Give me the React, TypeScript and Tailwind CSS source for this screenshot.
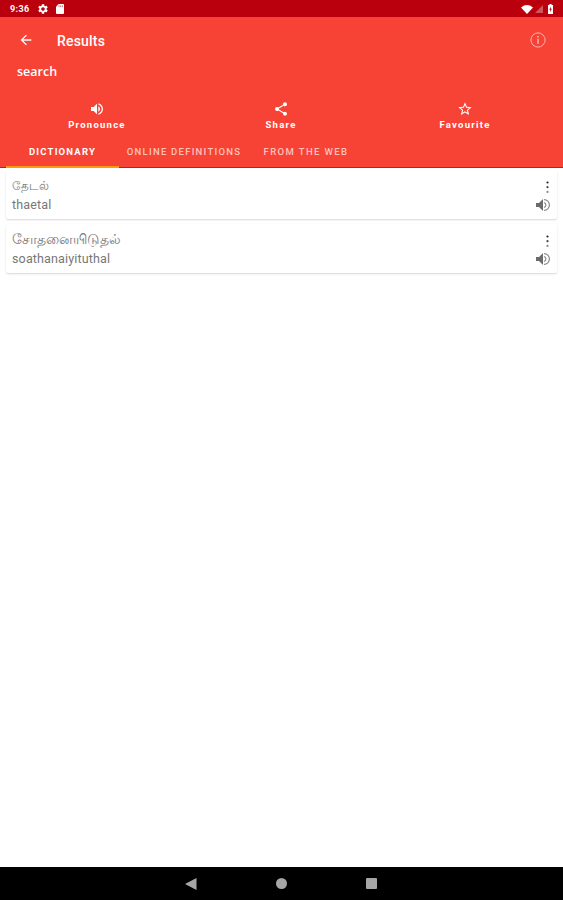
import type { ReactNode } from 'react';
import { MdArrowBack, MdSettings, MdShare, MdStarOutline, MdVolumeUp } from 'react-icons/md';

const entries = [
  { word: 'தேடல்', roman: 'thaetal', wordStyle: 'text-[12px] leading-[20px]' },
  { word: 'சோதனையிடுதல்', roman: 'soathanaiyituthal', wordStyle: 'text-[13.7px] leading-[19px]' },
];

function Action({ icon, label }: { icon: ReactNode; label: string }) {
  return (
    <div className="flex flex-1 flex-col items-center">
      <div className="flex h-4 items-center">{icon}</div>
      <span className="text-[9.5px] leading-[15px] font-bold tracking-[1.25px]">{label}</span>
    </div>
  );
}

function Entry({ word, roman, wordStyle }: { word: string; roman: string; wordStyle: string }) {
  return (
    <div className="flex h-[49px] justify-between rounded-xs bg-white pr-[7px] pl-1.5 shadow-[0_1px_2px_rgba(0,0,0,0.16)]">
      <div className="flex flex-col pt-[6px] text-[#777]">
        <span className={`h-[19px] whitespace-nowrap ${wordStyle}`}>{word}</span>
        <span className="h-[19px] text-[12.5px] leading-[19px] tracking-[0.15px]">{roman}</span>
      </div>
      <div className="flex flex-col items-end pt-[11px]">
        <svg className="mr-px h-3 w-[3px]" viewBox="0 0 3 12">
          <circle cx="1.5" cy="1.5" r="1.1" fill="#222" />
          <circle cx="1.5" cy="6.2" r="1.1" fill="#444" />
          <circle cx="1.5" cy="10.9" r="1.1" fill="#888" />
        </svg>
        <svg className="mt-[6px] h-3 w-3.5" viewBox="0 0 14 12">
          <path d="M0 4h3l4-4v12L3 8H0z" fill="#6b6b6b" />
          <path d="M8 .6a5.4 5.4 0 0 1 0 10.8M8 3.5a2.6 2.6 0 0 1 0 5" fill="none" stroke="#888" strokeWidth="1.2" />
        </svg>
      </div>
    </div>
  );
}

export default function App() {
  return (
    <div className="flex h-[900px] w-[563px] flex-col overflow-hidden bg-white font-[Roboto,'Noto_Sans',sans-serif]">
      <div className="flex h-[17px] shrink-0 items-center bg-[#ba000d] pt-px pr-[10px] pl-[10px] text-white">
        <span className="w-[27px] text-[9px] leading-none font-bold tracking-[0.4px]">9:36</span>
        <MdSettings className="size-3" />
        <svg className="ml-[7px] h-[10px] w-2" viewBox="0 0 8 10">
          <path d="M2.6 0H7a1 1 0 0 1 1 1v8a1 1 0 0 1-1 1H1a1 1 0 0 1-1-1V2.7z" fill="white" />
          <path d="M3 1.4v1.7M4.7 1.4v1.7M6.4 1.4v1.7" stroke="#ba000d" strokeWidth=".6" />
        </svg>
        <div className="ml-auto flex items-center">
          <svg className="h-[9px] w-3" viewBox="0 0 12 9">
            <path d="M0 2.4Q6-2.2 12 2.4L6 9z" fill="white" />
          </svg>
          <svg className="ml-0.5 size-2" viewBox="0 0 8 8">
            <path d="M0 8L8 0v8z" fill="#d8525a" />
          </svg>
          <svg className="ml-[5px] h-[10px] w-[5px]" viewBox="0 0 5 10">
            <path d="M1.4 0h2.2v1H5v9H0V1h1.4z" fill="white" />
            <path d="M2.8 2.4L1.3 5.8h1l-.1 2.5 1.6-3.6h-1z" fill="#ba000d" />
          </svg>
        </div>
      </div>
      <header className="flex h-[151px] shrink-0 flex-col bg-[#f64336] text-white">
        <div className="flex h-[46px] items-center pr-[17px] pl-[18px]">
          <MdArrowBack className="size-4" />
          <h1 className="mt-0.5 ml-[23px] text-[14px] leading-none font-medium tracking-[0.2px]">Results</h1>
          <svg className="ml-auto size-4" viewBox="0 0 16 16" fill="none" stroke="#ffb3a9">
            <circle cx="8" cy="8" r="7.1" strokeWidth="1" />
            <path d="M8 6.8v5M8 4v1.4" strokeWidth="1.6" />
          </svg>
        </div>
        <div className="h-[38px] pl-[17px] font-['Open_Sans',sans-serif] text-[12.5px] leading-[17px] font-semibold">search</div>
        <div className="flex h-[33px] pr-[6px] pl-[5px]">
          <Action icon={<MdVolumeUp className="size-4" />} label="Pronounce" />
          <Action icon={<MdShare className="size-4" />} label="Share" />
          <Action icon={<MdStarOutline className="size-4" />} label="Favourite" />
        </div>
        <nav className="flex h-[34px] border-b border-[#df1010] pl-1.5 text-[9.5px] leading-[35px] font-medium whitespace-nowrap">
          <div className="-mb-px w-[113px] border-b-2 border-[#ff9b12] text-center font-bold tracking-[1.2px]">DICTIONARY</div>
          <div className="w-[130px] text-center tracking-[1.25px] text-[#ffc2ba]">ONLINE DEFINITIONS</div>
          <div className="w-[114px] text-center tracking-[1.4px] text-[#ffc2ba]">FROM THE WEB</div>
        </nav>
      </header>
      <main className="flex flex-1 flex-col gap-[5px] px-1.5 pt-[2px]">
        {entries.map((entry) => (
          <Entry key={entry.roman} {...entry} />
        ))}
      </main>
      <footer className="flex h-[33px] shrink-0 items-center bg-black pl-[185px]">
        <svg className="h-3 w-3" viewBox="0 0 12 12"><path d="M0 6L11.5 0v12z" fill="#a6a6a6" /></svg>
        <div className="ml-[79px] size-[11px] rounded-full bg-[#a6a6a6]" />
        <div className="ml-[79px] size-[11px] rounded-[1px] bg-[#a6a6a6]" />
      </footer>
    </div>
  );
}
